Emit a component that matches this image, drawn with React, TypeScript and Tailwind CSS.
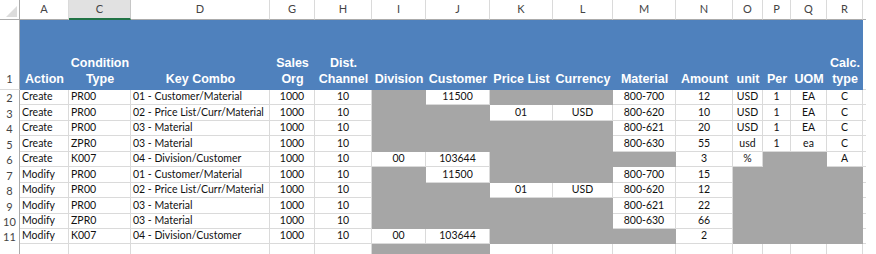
type Cell = string | null;

interface Row {
	num: string;
	action: string;
	cond: string;
	combo: string;
	org: string;
	chan: string;
	rest: Cell[]; // I..R, null = gray fill
}

const letters = ["A", "C", "D", "G", "H", "I", "J", "K", "L", "M", "N", "O", "P", "Q", "R"];
const headers: string[][] = [
	["Action"],
	["Condition", "Type"],
	["Key Combo"],
	["Sales", "Org"],
	["Dist.", "Channel"],
	["Division"],
	["Customer"],
	["Price List"],
	["Currency"],
	["Material"],
	["Amount"],
	["unit"],
	["Per"],
	["UOM"],
	["Calc.", "type"],
];

const rows: Row[] = [
	{ num: "2", action: "Create", cond: "PR00", combo: "01 - Customer/Material", org: "1000", chan: "10", rest: [null, "11500", null, null, "800-700", "12", "USD", "1", "EA", "C"] },
	{ num: "3", action: "Create", cond: "PR00", combo: "02 - Price List/Curr/Material", org: "1000", chan: "10", rest: [null, null, "01", "USD", "800-620", "10", "USD", "1", "EA", "C"] },
	{ num: "4", action: "Create", cond: "PR00", combo: "03 - Material", org: "1000", chan: "10", rest: [null, null, null, null, "800-621", "20", "USD", "1", "EA", "C"] },
	{ num: "5", action: "Create", cond: "ZPR0", combo: "03 - Material", org: "1000", chan: "10", rest: [null, null, null, null, "800-630", "55", "usd", "1", "ea", "C"] },
	{ num: "6", action: "Create", cond: "K007", combo: "04 - Division/Customer", org: "1000", chan: "10", rest: ["00", "103644", null, null, null, "3", "%", null, null, "A"] },
	{ num: "7", action: "Modify", cond: "PR00", combo: "01 - Customer/Material", org: "1000", chan: "10", rest: [null, "11500", null, null, "800-700", "15", null, null, null, null] },
	{ num: "8", action: "Modify", cond: "PR00", combo: "02 - Price List/Curr/Material", org: "1000", chan: "10", rest: [null, null, "01", "USD", "800-620", "12", null, null, null, null] },
	{ num: "9", action: "Modify", cond: "PR00", combo: "03 - Material", org: "1000", chan: "10", rest: [null, null, null, null, "800-621", "22", null, null, null, null] },
	{ num: "10", action: "Modify", cond: "ZPR0", combo: "03 - Material", org: "1000", chan: "10", rest: [null, null, null, null, "800-630", "66", null, null, null, null] },
	{ num: "11", action: "Modify", cond: "K007", combo: "04 - Division/Customer", org: "1000", chan: "10", rest: ["00", "103644", null, null, null, "2", null, null, null, null] },
	// row 12 is cut off by the window edge
	{ num: "", action: "", cond: "", combo: "", org: "", chan: "", rest: [null, null, "", "", "", "", "", "", "", ""] },
];

const DataCell = ({ value, left }: { value: Cell; left?: boolean }) => {
	if (value === null) {
		return <div className="border-r border-b border-[#a6a6a6] bg-[#a6a6a6]" />;
	}
	return (
		<div
			className={`flex items-end overflow-hidden whitespace-nowrap border-r border-b border-[#dadada] bg-white pb-px leading-[13px] text-[#111] ${
				left ? "justify-start pl-[2px]" : "justify-center"
			}`}
		>
			{value}
		</div>
	);
};

export default function App() {
	return (
		<div className="h-[254px] w-[876px] overflow-hidden bg-white font-['Lato',sans-serif] text-[10.5px]">
			<div className="grid grid-cols-[20px_49px_62px_139px_45px_57px_54px_64px_63px_60px_63px_57px_30px_28px_36px_36px_3px] grid-rows-[20px_70px_repeat(11,15.45px)]">
				{/* column letters */}
				<div className="relative border-r border-b border-[#ababab] bg-white">
					<svg className="absolute right-[2px] bottom-[2px]" width="11" height="11" viewBox="0 0 11 11">
						<polygon points="11,0 11,11 0,11" fill="#dcdcdc" />
					</svg>
				</div>
				{letters.map((l) => (
					<div
						key={l}
						className={`flex items-center justify-center border-r text-[11px] text-[#444] ${
							l === "C"
								? "border-b-2 border-r-[#c6c6c6] border-b-[#217346] bg-[#e1e1e1]"
								: "border-b border-r-[#dadada] border-b-[#ababab] bg-white"
						}`}
					>
						{l}
					</div>
				))}
				<div className="border-b border-[#ababab] bg-white" />

				{/* header row 1 */}
				<div className="flex items-end justify-center border-r border-b border-r-[#ababab] border-b-[#dadada] pb-[2px] text-[11px] text-[#444]">
					1
				</div>
				{headers.map((h) => (
					<div
						key={h.join(" ")}
						className="flex flex-col items-center justify-end whitespace-nowrap bg-[#4f81bd] pb-[3px] text-center font-['Liberation_Sans',Arial,sans-serif] text-[12.5px] leading-[16px] font-bold text-white"
					>
						{h.map((w) => (
							<span key={w}>{w}</span>
						))}
					</div>
				))}
				<div className="border-b border-[#dadada] bg-white" />

				{/* data rows */}
				{rows.map((r, idx) => (
					<div key={idx} className="contents">
						<div className="flex items-end justify-center border-r border-r-[#ababab] pb-px text-[11px] leading-[13px] text-[#444]">
							{r.num}
						</div>
						<DataCell value={r.action} left />
						<DataCell value={r.cond} left />
						<DataCell value={r.combo} left />
						<DataCell value={r.org} />
						<DataCell value={r.chan} />
						{r.rest.map((c, i) => (
							<DataCell key={i} value={c} />
						))}
						<div className="border-b border-[#dadada]" />
					</div>
				))}
			</div>
		</div>
	);
}
